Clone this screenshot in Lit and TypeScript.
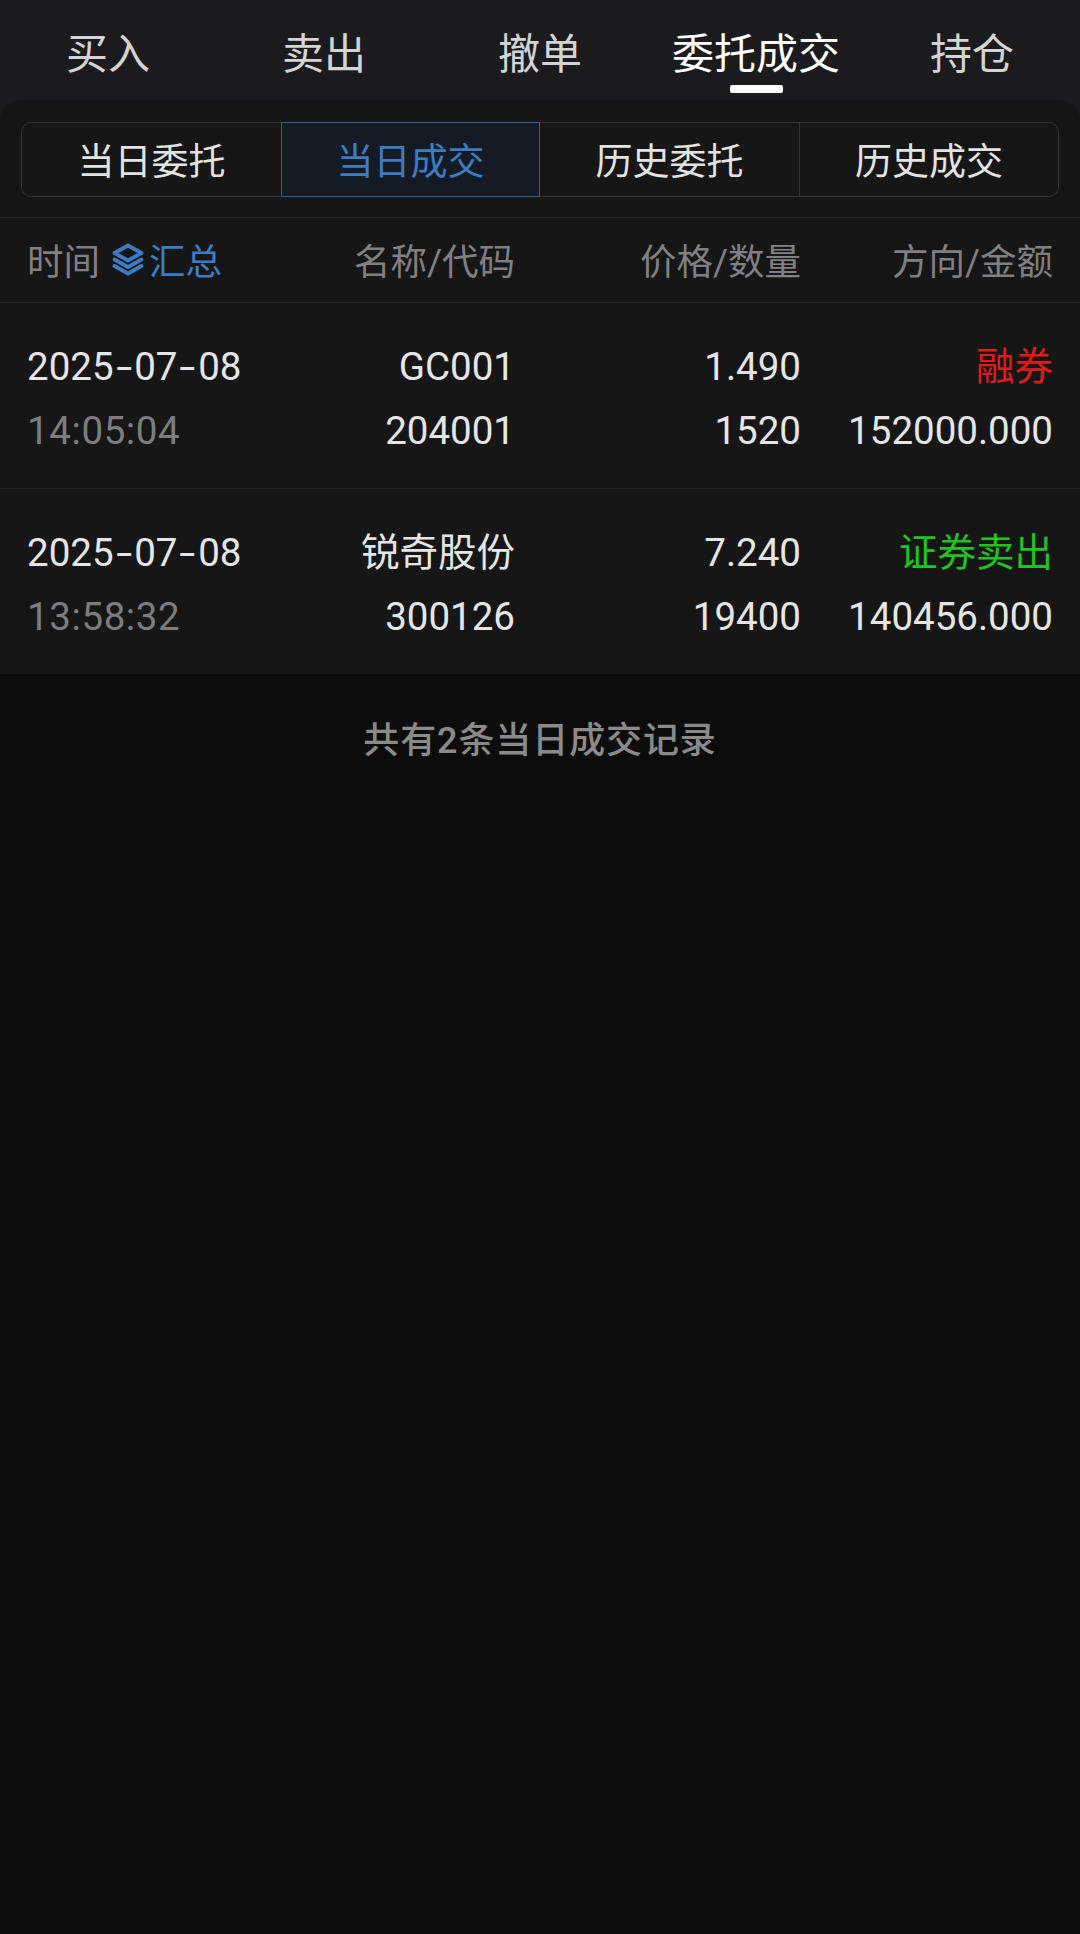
import { LitElement, css, html } from 'lit';
import { customElement, state } from 'lit/decorators.js';
import { classMap } from 'lit/directives/class-map.js';

interface Trade {
  date: string;
  time: string;
  name: string;
  code: string;
  price: string;
  qty: string;
  side: string;
  sideClass: 'up' | 'down';
  amount: string;
}

const TABS = ['买入', '卖出', '撤单', '委托成交', '持仓'];
const SEGMENTS = ['当日委托', '当日成交', '历史委托', '历史成交'];
const TRADES: Trade[] = [
  { date: '2025-07-08', time: '14:05:04', name: 'GC001', code: '204001', price: '1.490', qty: '1520', side: '融券', sideClass: 'up', amount: '152000.000' },
  { date: '2025-07-08', time: '13:58:32', name: '锐奇股份', code: '300126', price: '7.240', qty: '19400', side: '证券卖出', sideClass: 'down', amount: '140456.000' },
];

@customElement('app-root')
export class AppRoot extends LitElement {
  @state() private activeTab = 3;
  @state() private activeSegment = 1;

  static override styles = css`
    :host {
      display: block;
      min-height: 1934px;
      background: #0c0c0c;
      font-family: Roboto, 'Noto Sans CJK SC', sans-serif;
    }

    .top {
      background: #1b1b1e;
    }

    .tabs {
      display: grid;
      grid-template-columns: repeat(5, 1fr);
      height: 100px;
    }

    .tab {
      position: relative;
      text-align: center;
      font-size: 42px;
      line-height: 110px;
      color: #d4d4d4;
    }

    .tab.active {
      color: #fff;
    }

    .tab.active::after {
      content: '';
      position: absolute;
      left: 50%;
      top: 85px;
      width: 53px;
      height: 8px;
      margin-left: -26.5px;
      border-radius: 2px;
      background: #fff;
    }

    .panel {
      background: #161617;
      border-radius: 20px 20px 0 0;
    }

    .seg-wrap {
      height: 118px;
      padding: 22px 21px 0;
      border-bottom: 1px solid #232325;
      box-sizing: border-box;
    }

    .segments {
      display: grid;
      grid-template-columns: repeat(4, 1fr);
      height: 75px;
      box-sizing: border-box;
      border: 1px solid #333335;
      border-radius: 10px;
    }

    .segment {
      display: flex;
      align-items: center;
      justify-content: center;
      padding-bottom: 2px;
      font-size: 37px;
      color: #e4e4e4;
      border-left: 1px solid #333335;
    }

    .segment:first-child {
      border-left: 0;
    }

    .segment.active {
      margin: -1px 0;
      color: #3c7cc2;
      background: #141b25;
      border: 1px solid #2f5f94;
    }

    .segment.active + .segment {
      border-left: 0;
    }

    .grid {
      display: grid;
      grid-template-columns: 225px 263px 286px 252px;
      padding: 0 27px;
      text-align: right;
    }

    .head {
      height: 85px;
      align-items: center;
      font-size: 36.5px;
      color: #808082;
      border-bottom: 1px solid #232325;
      padding-bottom: 2px;
      box-sizing: border-box;
    }

    .head .first {
      display: flex;
      align-items: center;
      text-align: left;
      white-space: nowrap;
    }

    .summary {
      display: flex;
      align-items: center;
      margin-left: 11px;
      color: #3c7cc2;
    }

    .summary svg {
      margin-right: 4px;
    }

    .row {
      height: 185px;
      padding-top: 7px;
      box-sizing: border-box;
      align-content: center;
      font-size: 38.5px;
      line-height: 64px;
      color: #e6e6e6;
    }

    .row + .row {
      height: 186px;
      border-top: 1px solid #232325;
    }

    .row .left {
      text-align: left;
      white-space: nowrap;
    }

    .dash {
      display: inline-block;
      margin: 0 5px;
      transform: scaleX(1.5);
    }

    .muted {
      color: #7d7d7f;
      letter-spacing: 0.6px;
    }

    .up {
      color: #e01b1b;
    }

    .down {
      color: #1fc41f;
    }

    .footer {
      padding-top: 38px;
      text-align: center;
      font-size: 36px;
      font-weight: 500;
      line-height: 58px;
      letter-spacing: 0.9px;
      color: #8a8a8a;
    }
  `;

  private renderDate(date: string) {
    const parts = date.split('-');
    return parts.map((p, i) => html`${i > 0 ? html`<span class="dash">-</span>` : ''}${p}`);
  }

  private renderIcon() {
    return html`<svg width="34" height="34" viewBox="0 0 34 34" fill="none" stroke="#3c7cc2" stroke-width="3.8" stroke-linejoin="round" stroke-linecap="round">
      <path d="M17 3.5 30.5 11 17 18.5 3.5 11Z" />
      <path d="M3.5 17.5 17 25 30.5 17.5" />
      <path d="M3.5 24 17 31.5 30.5 24" />
    </svg>`;
  }

  protected override render() {
    return html`
      <div class="top">
        <div class="tabs">
          ${TABS.map((t, i) => html`<div class=${classMap({ tab: true, active: i === this.activeTab })}>${t}</div>`)}
        </div>
        <div class="panel">
          <div class="seg-wrap">
            <div class="segments">
              ${SEGMENTS.map((s, i) => html`<div class=${classMap({ segment: true, active: i === this.activeSegment })}>${s}</div>`)}
            </div>
          </div>
          <div class="grid head">
            <div class="first">时间<span class="summary">${this.renderIcon()}汇总</span></div>
            <div>名称/代码</div>
            <div>价格/数量</div>
            <div>方向/金额</div>
          </div>
          ${TRADES.map(
            (t) => html`
              <div class="grid row">
                <div class="left">${this.renderDate(t.date)}<br /><span class="muted">${t.time}</span></div>
                <div>${t.name}<br />${t.code}</div>
                <div>${t.price}<br />${t.qty}</div>
                <div><span class=${t.sideClass}>${t.side}</span><br />${t.amount}</div>
              </div>
            `,
          )}
        </div>
      </div>
      <div class="footer">共有2条当日成交记录</div>
    `;
  }
}
